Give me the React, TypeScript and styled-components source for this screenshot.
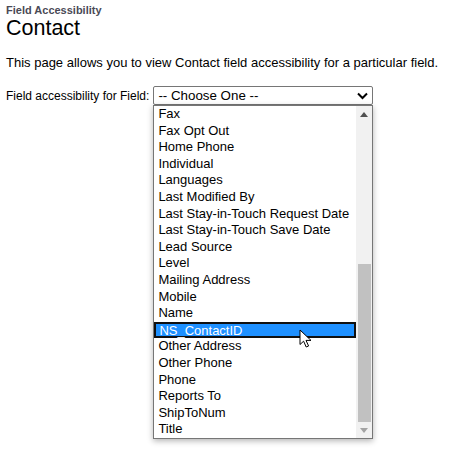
import React from "react";
import styled, { createGlobalStyle } from "styled-components";

const Global = createGlobalStyle`
  html, body { margin: 0; padding: 0; background: #fff; min-height: 100%; height: 100%; }
  #root { min-height: 100%; }
  body { font-family: "Liberation Sans", Arial, sans-serif; color: #000; }
`;

const Page = styled.div`
  padding: 5px 6px 0 6px;
  min-height: 453px;
  box-sizing: border-box;
`;

const Kicker = styled.div`
  font-size: 11px;
  font-weight: bold;
  color: #4a4a56;
  line-height: 11px;
`;

const Title = styled.h1`
  margin: 0;
  font-size: 21.5px;
  font-weight: normal;
  line-height: 24px;
  color: #000;
`;

const Desc = styled.p`
  margin: 15px 0 0 0;
  font-size: 13px;
  line-height: 15px;
  color: #000;
`;

const Row = styled.div`
  margin-top: 16px;
  display: flex;
  align-items: flex-start;
  gap: 4px;
`;

const Label = styled.span`
  font-size: 12px;
  line-height: 15px;
  padding-top: 3px;
  color: #000;
`;

const SelectWrap = styled.div`
  position: relative;
  width: 220px;
  height: 19px;
`;

const SelectBox = styled.div`
  box-sizing: border-box;
  height: 19px;
  border: 1px solid #767676;
  border-radius: 2px;
  background: #fff;
  display: flex;
  align-items: center;
  justify-content: space-between;
  padding: 0 4px 0 4px;
  font-size: 13.33px;
`;

const List = styled.div`
  position: absolute;
  left: 0;
  top: 19px;
  z-index: 5;
  box-sizing: border-box;
  width: 220px;
  height: 334px;
  border: 1px solid #767676;
  background: #fff;
  box-shadow: 0 2px 6px rgba(0, 0, 0, 0.3);
  display: flex;
`;

const Items = styled.div`
  flex: 1;
  display: flex;
  flex-direction: column;
  padding-top: 0px;
`;

const Item = styled.div<{ $sel?: boolean }>`
  box-sizing: border-box;
  height: 16.6px;
  line-height: 14.6px;
  font-size: 13px;
  padding-left: ${(p) => (p.$sel ? "3px" : "4px")};
  white-space: nowrap;
  color: ${(p) => (p.$sel ? "#fff" : "#000")};
  background: ${(p) => (p.$sel ? "#1e90ff" : "transparent")};
  border: ${(p) => (p.$sel ? "2px solid #101010" : "1px solid transparent")};
  border-left-width: ${(p) => (p.$sel ? "2px" : "0")};
`;

const Scroll = styled.div`
  width: 16px;
  background: #f1f1f1;
  display: flex;
  flex-direction: column;
  align-items: center;
`;

const Arrow = styled.div`
  height: 16px;
  width: 16px;
  display: flex;
  align-items: center;
  justify-content: center;
`;

const Track = styled.div`
  flex: 1;
  width: 100%;
  display: flex;
  flex-direction: column;
  justify-content: flex-end;
  align-items: center;
`;

const Thumb = styled.div`
  width: 13px;
  height: 158px;
  background: #c1c1c1;
`;

const Cursor = styled.svg`
  position: absolute;
  z-index: 6;
  left: 146px;
  top: 243px;
`;

const options = [
  "Fax",
  "Fax Opt Out",
  "Home Phone",
  "Individual",
  "Languages",
  "Last Modified By",
  "Last Stay-in-Touch Request Date",
  "Last Stay-in-Touch Save Date",
  "Lead Source",
  "Level",
  "Mailing Address",
  "Mobile",
  "Name",
  "NS_ContactID",
  "Other Address",
  "Other Phone",
  "Phone",
  "Reports To",
  "ShipToNum",
  "Title",
];

export default function App() {
  return (
    <Page>
      <Global />
      <Kicker>Field Accessibility</Kicker>
      <Title>Contact</Title>
      <Desc>This page allows you to view Contact field accessibility for a particular field.</Desc>
      <Row>
        <Label>Field accessibility for Field:</Label>
        <SelectWrap>
          <SelectBox>
            <span>-- Choose One --</span>
            <svg width="11" height="8" viewBox="0 0 11 8">
              <path d="M1 1.5 L5.5 6 L10 1.5" fill="none" stroke="#000" strokeWidth="2" />
            </svg>
          </SelectBox>
          <List>
            <Items>
              {options.map((o) => (
                <Item key={o} $sel={o === "NS_ContactID"}>
                  {o}
                </Item>
              ))}
            </Items>
            <Scroll>
              <Arrow>
                <svg width="8" height="5" viewBox="0 0 8 5">
                  <path d="M0 5 L4 0 L8 5 Z" fill="#505050" />
                </svg>
              </Arrow>
              <Track>
                <Thumb />
              </Track>
              <Arrow>
                <svg width="8" height="5" viewBox="0 0 8 5">
                  <path d="M0 0 L4 5 L8 0 Z" fill="#a3a3a3" />
                </svg>
              </Arrow>
            </Scroll>
          </List>
          <Cursor width="14" height="20" viewBox="0 0 14 20">
            <path
              d="M1 1 L1 15.5 L4.6 12.2 L7.2 18 L9.6 17 L7 11.4 L12 11.4 Z"
              fill="#fff"
              stroke="#000"
              strokeWidth="1"
              strokeLinejoin="round"
            />
          </Cursor>
        </SelectWrap>
      </Row>
    </Page>
  );
}
